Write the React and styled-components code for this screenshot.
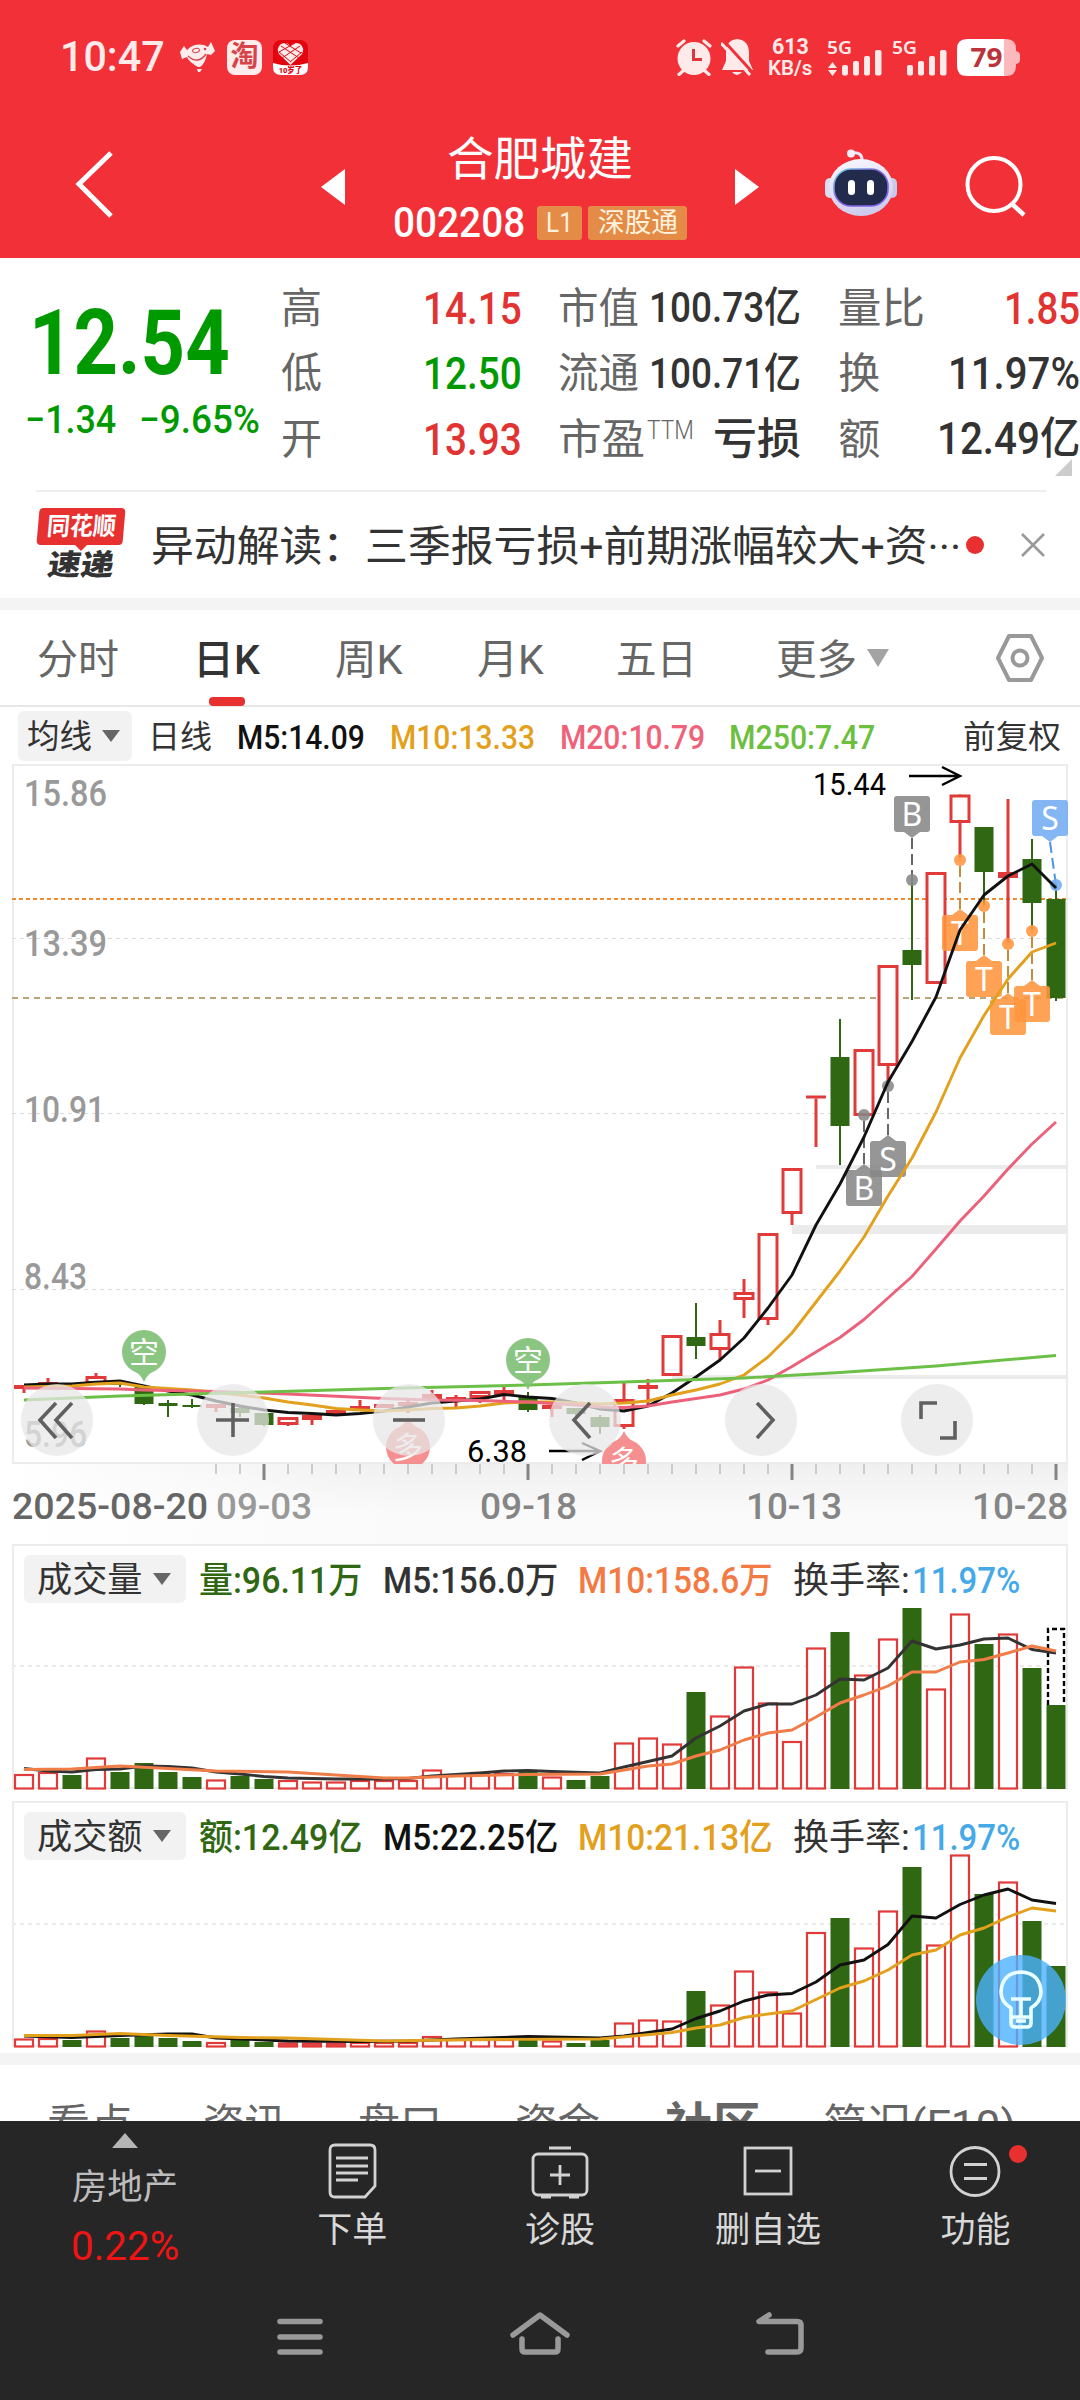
import React, { useLayoutEffect, useRef, useState } from 'react';
import styled, { createGlobalStyle } from 'styled-components';

const Global = createGlobalStyle`
  html, body { margin: 0; padding: 0; background: #fff; }
  body { font-family: Roboto, "Noto Sans CJK SC", sans-serif; line-height: 1; width: 1080px; overflow: hidden; }
  * { box-sizing: border-box; }
  svg { display: block; flex: none; }
`;

/* ---------- text that is condensed or widened to a given width ---------- */
const FitBox = styled.span`
  display: block;
  flex: none;
  width: ${(p) => p.$w}px;
  margin-left: ${(p) => p.$ml || 0}px;
  margin-top: ${(p) => p.$mt || 0}px;
  font-size: ${(p) => p.$size}px;
  font-weight: ${(p) => p.$weight || 400};
  color: ${(p) => p.$color || 'inherit'};
  white-space: nowrap;
  line-height: 1;
`;
const FitInner = styled.span`
  display: inline-block;
  vertical-align: top;
  transform-origin: 0 50%;
`;
function Fit({ w, ml, mt, size, weight, color, children }) {
  const ref = useRef(null);
  const [k, setK] = useState(1);
  useLayoutEffect(() => {
    if (ref.current && ref.current.offsetWidth) setK(w / ref.current.offsetWidth);
  }, [w, children]);
  return (
    <FitBox $w={w} $ml={ml} $mt={mt} $size={size} $weight={weight} $color={color}>
      <FitInner ref={ref} style={{ transform: `scaleX(${k})` }}>{children}</FitInner>
    </FitBox>
  );
}

const Screen = styled.div`
  width: 1080px;
  height: 2400px;
  display: flex;
  flex-direction: column;
  overflow: hidden;
  background: #fff;
`;

/* ---------- header ---------- */
const Header = styled.header`
  height: 258px;
  flex: none;
  background: #f13038;
  color: #fff;
  display: flex;
  flex-direction: column;
`;
const StatusBar = styled.div`
  height: 114px;
  padding: 0 59px 0 60px;
  display: flex;
  align-items: center;
  justify-content: space-between;
`;
const StatusSide = styled.div`
  display: flex;
  align-items: center;
`;
const AppBadge = styled.span`
  width: 35px;
  height: 35px;
  border-radius: 8px;
  margin-left: ${(p) => p.$ml}px;
  background: #ffeded;
  color: #d8434a;
  font-size: 28px;
  font-weight: 700;
  display: flex;
  align-items: center;
  justify-content: center;
`;
const NetSpeed = styled.div`
  margin-left: 15px;
  display: flex;
  flex-direction: column;
  align-items: center;
  color: #ffeaea;
`;
const SignalIcon = styled.svg`
  margin-left: ${(p) => p.$ml}px;
  overflow: visible;
`;
const TitleBar = styled.div`
  height: 144px;
  display: grid;
  grid-template-columns: 321px 24px 390px 24px 66px 72px 1fr;
`;
const TitleCell = styled.div`
  padding-left: ${(p) => p.$pl || 0}px;
  padding-top: ${(p) => p.$pt || 0}px;
`;
const TitleCenter = styled.div`
  display: flex;
  flex-direction: column;
  align-items: center;
  padding-top: 22px;
`;
const CodeLine = styled.div`
  display: flex;
  align-items: center;
  margin-top: 20px;
`;
const Badge = styled.span`
  width: ${(p) => p.$w}px;
  height: 34px;
  margin-left: ${(p) => p.$ml}px;
  border-radius: 3px;
  background: #e48b47;
  color: #fff3df;
  display: flex;
  align-items: center;
  justify-content: center;
`;

/* ---------- quote ---------- */
const Quote = styled.section`
  height: 232px;
  flex: none;
  display: flex;
  position: relative;
`;
const PriceCol = styled.div`
  width: 281px;
  padding: 41px 0 0 25px;
  color: #009a00;
`;
const Changes = styled.div`
  display: flex;
  margin-top: 12px;
`;
const StatCol = styled.div`
  width: ${(p) => p.$w}px;
  margin-right: ${(p) => p.$mr}px;
  padding-top: 17px;
  display: flex;
  flex-direction: column;
`;
const StatRow = styled.div`
  height: 65.5px;
  display: flex;
  align-items: center;
  justify-content: space-between;
`;
const LabelGroup = styled.div`
  display: flex;
  color: #666;
`;
const Corner = styled.i`
  position: absolute;
  right: 8px;
  bottom: 14px;
  border-left: 17px solid transparent;
  border-bottom: 17px solid #ccc;
`;

/* ---------- news ---------- */
const News = styled.section`
  height: 108px;
  flex: none;
  margin: 0 34px 0 36px;
  border-top: 2px solid #eee;
  display: flex;
  align-items: center;
`;
const Logo = styled.div`
  width: 90px;
  height: 74px;
  display: flex;
  flex-direction: column;
  align-items: center;
`;
const LogoTop = styled.div`
  width: 86px;
  height: 37px;
  background: #e73131;
  border-radius: 4px;
  transform: skewX(-5deg);
  color: #fff;
  display: flex;
  align-items: center;
  justify-content: center;
`;
const LogoTip = styled.i`
  border: 6px solid transparent;
  border-top: 6px solid #e73131;
  border-bottom: 0;
`;
const LogoBottom = styled.div`
  transform: skewX(-9deg);
  margin-top: 0;
  color: #333;
`;
const Dot = styled.i`
  width: 18px;
  height: 18px;
  border-radius: 50%;
  background: #e83030;
  margin-left: ${(p) => p.$ml || 0}px;
`;
const Band = styled.div`
  height: 12px;
  flex: none;
  background: #f4f4f4;
`;

/* ---------- period tabs ---------- */
const Tabs = styled.nav`
  height: 97px;
  flex: none;
  border-bottom: 2px solid #e7e7e7;
  display: flex;
  color: #666;
`;
const Tab = styled.div`
  margin-left: ${(p) => p.$ml}px;
  padding-top: 30px;
  height: 96px;
  display: flex;
  flex-direction: column;
  justify-content: space-between;
  align-items: center;
  color: ${(p) => (p.$on ? '#333' : '#666')};
`;
const Indicator = styled.i`
  width: 36px;
  height: 9px;
  border-radius: 4px;
  background: #e83030;
`;
const Caret = styled.i`
  border-left: ${(p) => p.$w / 2}px solid transparent;
  border-right: ${(p) => p.$w / 2}px solid transparent;
  border-top: ${(p) => p.$h}px solid ${(p) => p.$c || '#666'};
  margin-left: ${(p) => p.$ml || 0}px;
  margin-top: ${(p) => p.$mt || 0}px;
`;
const MaRow = styled.div`
  height: 57px;
  flex: none;
  padding-left: 18px;
  display: flex;
  align-items: center;
`;
const Chip = styled.div`
  width: ${(p) => p.$w}px;
  height: ${(p) => p.$h}px;
  padding-left: ${(p) => p.$pl}px;
  border-radius: 6px;
  background: #f2f2f2;
  color: #333;
  display: flex;
  align-items: center;
`;

/* ---------- charts ---------- */
const ChartWrap = styled.div`
  position: relative;
  height: 700px;
  flex: none;
`;
const Controls = styled.div`
  position: absolute;
  left: 21px;
  bottom: 8px;
  display: flex;
  gap: 104px;
`;
const RoundButton = styled.button`
  width: 72px;
  height: 72px;
  padding: 0;
  border: 0;
  border-radius: 50%;
  background: rgba(231, 231, 231, 0.74);
  display: flex;
  align-items: center;
  justify-content: center;
`;
const DateAxis = styled.div`
  height: 80px;
  flex: none;
  width: 1056px;
  margin-left: 12px;
  padding: 0;
  background: linear-gradient(90deg, #fff 0, rgba(255, 255, 255, 0) 400px), linear-gradient(#efefef, #fafafa 60%);
`;
const Dates = styled.div`
  display: flex;
  margin-top: 3px;
  color: #858585;
`;
const Panel = styled.section`
  position: relative;
  height: ${(p) => p.$h}px;
  flex: none;
`;
const PanelHead = styled.div`
  position: absolute;
  left: 24px;
  top: 11px;
  display: flex;
  align-items: center;
`;
const Bulb = styled.div`
  position: absolute;
  right: 14px;
  bottom: 8px;
  width: 90px;
  height: 90px;
  border-radius: 50%;
  background: rgba(75, 177, 255, 0.8);
  display: flex;
  align-items: center;
  justify-content: center;
`;

/* ---------- bottom ---------- */
const SectionTabs = styled.div`
  height: 56px;
  flex: none;
  overflow: hidden;
  display: flex;
  align-items: flex-start;
  padding-top: 39px;
  color: #666;
`;
const Footer = styled.footer`
  flex: 1;
  background: #262626;
  color: #d8d8d8;
`;
const Actions = styled.div`
  height: 170px;
  display: grid;
  grid-template-columns: 249px repeat(4, 207.7px);
`;
const Sector = styled.div`
  display: flex;
  flex-direction: column;
  align-items: center;
  padding-top: 12px;
`;
const UpCaret = styled.i`
  border-left: 13.5px solid transparent;
  border-right: 13.5px solid transparent;
  border-bottom: 15px solid #b5b5b5;
  margin-bottom: 22px;
`;
const Action = styled.div`
  display: flex;
  flex-direction: column;
  align-items: center;
  padding-top: 21px;
  padding-right: 1px;
  position: relative;
`;
const ActionDot = styled(Dot)`
  position: absolute;
  top: 24px;
  right: 53px;
`;
const SystemNav = styled.div`
  display: flex;
  padding: 20px 0 0 270px;
  gap: 180px;
`;

/* ---------- data ---------- */
const RED = '#e03a3a';
const GREEN = '#306713';
const cx = (i) => 24 + 24 * i;

// kind (r rising, g falling), body top, body bottom, wick top, wick bottom
const candles = [
  ['r', 1385, 1389, 1385, 1393], ['r', 1382, 1385, 1378, 1385], ['g', 1383, 1386, 1383, 1386], ['r', 1376, 1384, 1373, 1384],
  ['g', 1382, 1385, 1382, 1387], ['g', 1387, 1404, 1387, 1405], ['g', 1403, 1406, 1400, 1417], ['g', 1405, 1407, 1399, 1408],
  ['r', 1404, 1408, 1404, 1412], ['g', 1408, 1413, 1407, 1417], ['g', 1413, 1425, 1413, 1426], ['r', 1417, 1425, 1417, 1426],
  ['r', 1415, 1420, 1415, 1425], ['r', 1410, 1414, 1410, 1414], ['r', 1406, 1411, 1400, 1411], ['r', 1404, 1408, 1404, 1408],
  ['r', 1402, 1406, 1400, 1413], ['r', 1394, 1399, 1390, 1399], ['r', 1397, 1401, 1395, 1407], ['r', 1391, 1398, 1391, 1403],
  ['r', 1390, 1395, 1387, 1400], ['g', 1396, 1410, 1392, 1412], ['r', 1405, 1409, 1405, 1417], ['g', 1408, 1414, 1408, 1417],
  ['g', 1417, 1427, 1415, 1434], ['r', 1399, 1427, 1383, 1429], ['r', 1385, 1389, 1379, 1406], ['r', 1335, 1376, 1335, 1376],
  ['g', 1337, 1346, 1303, 1359], ['r', 1333, 1350, 1320, 1360], ['r', 1292, 1300, 1279, 1318], ['r', 1233, 1320, 1233, 1325],
  ['r', 1168, 1214, 1168, 1225], ['r', 1095.5, 1098.5, 1096, 1147], ['g', 1057, 1126, 1019, 1165], ['r', 1049, 1116, 1049, 1116],
  ['r', 965, 1066, 965, 1086], ['g', 950, 965, 880, 1000], ['r', 872, 984, 872, 984], ['r', 794.5, 823, 794, 858],
  ['g', 827, 872, 827, 905], ['r', 872, 878, 799, 943], ['g', 859, 903, 839, 930], ['g', 899, 998, 884, 1001],
];
const at = (ys, from = 0) => ys.map((y, i) => `${cx(from + i)},${y}`).join(' ');
const ma5 = at([1385, 1384, 1384, 1382.3, 1381, 1386, 1391, 1395, 1401, 1406, 1410, 1412.5, 1413.5, 1415, 1413.5, 1411, 1407, 1403, 1401, 1399, 1394.5, 1397, 1398.5, 1403, 1409, 1411, 1406, 1393, 1377, 1360, 1338, 1308, 1275, 1225, 1184, 1137, 1082, 1041.5, 997, 930, 895, 876, 864, 888]);
const ma10 = at([1387, 1386.5, 1386, 1384, 1383, 1387, 1388.5, 1390, 1392.5, 1395, 1398, 1402, 1405, 1408.5, 1410, 1411, 1410, 1408.5, 1408, 1406, 1403, 1402, 1402, 1403, 1404, 1403, 1401, 1395, 1390, 1384, 1375, 1357, 1333, 1302, 1271, 1237, 1196, 1158, 1112, 1058, 1015.5, 979, 952, 943]);
const ma20 = '24,1388 120,1389 144,1390 216,1391.5 288,1394 384,1398.5 432,1400 480,1400.5 528,1402 576,1405 600,1407 624,1407.5 648,1406 672,1402 696,1398.5 720,1395 744,1389 768,1380 792,1366.5 816,1352 840,1337.5 864,1319.5 888,1298 912,1276.5 936,1249 960,1221 984,1196 1008,1169 1032,1144 1056,1122';
const ma250 = '24,1400 120,1396 264,1392 384,1388.5 528,1385 624,1382 744,1378 840,1372.5 936,1366 1056,1355.5';

const kinds = candles.map((c) => c[0]);
const volTops = [1774, 1772, 1775, 1757.5, 1772, 1763, 1772, 1777, 1779.5, 1776, 1779, 1780, 1781.5, 1781.5, 1780, 1780, 1780, 1769.5, 1774, 1772, 1773, 1771, 1776.5, 1780, 1776, 1742.5, 1737.5, 1743.5, 1692, 1715.5, 1666.5, 1702.5, 1741, 1647.5, 1632, 1674.5, 1638.5, 1608, 1688.5, 1613.5, 1644, 1633.5, 1668, 1705];
const amtTops = [2038.5, 2038, 2040, 2030.5, 2038, 2036, 2038, 2041, 2042, 2040, 2042, 2042.5, 2042.5, 2042.5, 2042, 2042, 2042, 2036, 2039, 2039, 2039, 2038, 2040.5, 2043, 2040, 2022.5, 2019.5, 2020.5, 1991, 2004.5, 1970.5, 1991.5, 2012.5, 1932, 1918, 1947.5, 1910.5, 1867, 1944.5, 1854.5, 1894, 1881.5, 1921, 1966];
const vol5 = '24,1768.5 48,1771 72,1772 96,1769.5 120,1769 144,1766 168,1766.5 192,1768 216,1772 240,1774 264,1776.5 288,1778 336,1779 384,1779 408,1778.5 432,1776 456,1774.5 480,1773 504,1771 528,1770.5 552,1771.5 600,1773 624,1767 648,1761.5 672,1756 696,1738 720,1726 744,1711 768,1704 792,1704 816,1695 840,1679 864,1680 888,1668 912,1641 936,1649 960,1645 984,1639 1008,1638 1032,1649.5 1056,1653';
const vol10 = '24,1769.5 72,1769 120,1766 168,1768.5 216,1771 288,1772 336,1775 384,1778 408,1778 456,1776 528,1774.5 600,1774 624,1770 648,1766 672,1764 696,1756 720,1750 744,1740 768,1733 792,1730 816,1717 840,1703 864,1695 888,1686 912,1672 936,1672 960,1662 984,1659.5 1008,1653 1032,1646 1056,1651';
const amt5 = '24,2036 72,2037.5 120,2035.5 168,2034 192,2034 216,2038 264,2040 288,2041 360,2041.5 408,2041 456,2039 528,2036.5 600,2038 624,2036 672,2029 696,2018.5 720,2011 744,2001 768,1995 792,1993.5 816,1982 840,1965 864,1960 888,1944.5 912,1916 936,1918 960,1904.5 984,1895 1008,1889 1032,1900 1056,1903.5';
const amt10 = '24,2035.5 72,2035.5 120,2033.5 168,2035.5 240,2037.5 288,2038 384,2041 480,2039.5 600,2039 672,2032.5 696,2028 720,2025 744,2017.5 768,2014 792,2011 816,1999.5 840,1988 864,1981 888,1970 912,1955 936,1950 960,1935 984,1928 1008,1917 1032,1908 1056,1911';

const markers = [
  { t: 'B', x: 912, y: 796, dx: 912, dy: 880, c: '#888888', l: '#666' },
  { t: 'B', x: 864, y: 1170, dx: 864, dy: 1115, up: true, c: '#888888', l: '#666' },
  { t: 'S', x: 888, y: 1141, dx: 888, dy: 1086, up: true, c: '#888888', l: '#666' },
  { t: 'T', x: 960, y: 915, dx: 960, dy: 860, up: true, c: '#ff963f', l: '#c98a3c' },
  { t: 'T', x: 984, y: 961, dx: 984, dy: 906, up: true, c: '#ff963f', l: '#c98a3c' },
  { t: 'T', x: 1008, y: 999, dx: 1008, dy: 944, up: true, c: '#ff963f', l: '#c98a3c' },
  { t: 'T', x: 1032, y: 986, dx: 1032, dy: 931, up: true, c: '#ff963f', l: '#c98a3c' },
  { t: 'S', x: 1050, y: 800, dx: 1056, dy: 885, c: '#74adf2', l: '#4b94e6' },
];

function Marker({ t, x, y, dx, dy, up, c, l }) {
  const tip = up ? y - 6 : y + 42;
  const base = up ? y : y + 36;
  return (
    <g>
      <line x1={x} y1={tip} x2={dx} y2={dy} stroke={l} strokeWidth="2" strokeDasharray="11 5" />
      <g fill={c} opacity="0.88">
        <circle cx={dx} cy={dy} r="6" />
        <rect x={x - 18} y={y} width="36" height="36" rx="3" />
        <path d={`M${x - 8} ${base}L${x} ${tip}L${x + 8} ${base}Z`} />
      </g>
      <text x={x} y={y + 29.5} fontSize="32" fill="#fff" textAnchor="middle" fontFamily="Noto Sans">{t}</text>
    </g>
  );
}

function Pin({ x, y, up, c, children }) {
  const s = up ? -1 : 1;
  return (
    <g opacity="0.95">
      <circle cx={x} cy={y} r="22" fill={c} />
      <path d={`M${x - 13} ${y + 17 * s}Q${x - 3} ${y + 22 * s} ${x} ${y + 30 * s}Q${x + 3} ${y + 22 * s} ${x + 13} ${y + 17 * s}Z`} fill={c} />
      <text x={x} y={y + 11} fontSize="30" fill="#fff" textAnchor="middle" fontFamily="Noto Sans CJK SC">{children}</text>
    </g>
  );
}

function SvgText({ x, y, w, size, fill, weight, children }) {
  return (
    <text x={x} y={y} fontSize={size} fill={fill} fontWeight={weight} textLength={w} lengthAdjust="spacingAndGlyphs">{children}</text>
  );
}

function KChart() {
  return (
    <svg width="1080" height="700" viewBox="0 764 1080 700">
      <g stroke="#ececec" strokeWidth="2" fill="none">
        <rect x="13" y="765" width="1054" height="698" />
      </g>
      <g stroke="#dadada" strokeWidth="1.2" strokeDasharray="4 4">
        <line x1="12" x2="1067" y1="938.5" y2="938.5" />
        <line x1="12" x2="1067" y1="1113.5" y2="1113.5" />
        <line x1="12" x2="1067" y1="1289.5" y2="1289.5" />
      </g>
      <g fill="#ebebeb">
        <rect x="816" y="1165" width="252" height="4" />
        <rect x="792" y="1225" width="276" height="9" />
        <rect x="672" y="1375" width="396" height="4" />
      </g>
      <line x1="12" x2="1067" y1="899" y2="899" stroke="#f08a30" strokeWidth="2" strokeDasharray="4 3" />
      <line x1="12" x2="1067" y1="998" y2="998" stroke="#b9a47c" strokeWidth="2" strokeDasharray="6 5" />
      <g>
        <SvgText x="24" y="806" w="83" size="36" weight="500" fill="#999">15.86</SvgText>
        <SvgText x="24" y="956" w="83" size="36" weight="500" fill="#999">13.39</SvgText>
        <SvgText x="24" y="1122" w="81" size="36" weight="500" fill="#999">10.91</SvgText>
        <SvgText x="24" y="1289" w="63" size="36" weight="500" fill="#999">8.43</SvgText>
        <SvgText x="24" y="1447" w="63" size="36" weight="500" fill="#999">5.96</SvgText>
      </g>
      {candles.map(([k, t, b, wt, wb], i) => {
        const x = cx(i);
        if (k === 'g') {
          return (
            <g key={i} fill={GREEN}>
              <rect x={x - 1} y={wt} width="2" height={wb - wt} />
              <rect x={x - 9.5} y={t} width="19" height={b - t} />
            </g>
          );
        }
        const hollow = b - t > 6.5;
        return (
          <g key={i}>
            {wt < t && <rect x={x - 1.5} y={wt} width="3" height={t - wt} fill={RED} />}
            {wb > b && <rect x={x - 1.5} y={b} width="3" height={wb - b} fill={RED} />}
            {hollow
              ? <rect x={x - 9} y={t + 1.5} width="18" height={b - t - 3} fill="#fff" stroke={RED} strokeWidth="3" />
              : <rect x={x - 10} y={t} width="20" height={b - t} fill={RED} />}
          </g>
        );
      })}
      {markers.map((m, i) => <Marker key={i} {...m} />)}
      <g fill="none" strokeWidth="2.9" strokeLinejoin="round">
        <polyline points={ma5} stroke="#111" />
        <polyline points={ma10} stroke="#e2a01c" />
        <polyline points={ma20} stroke="#ec6079" />
        <polyline points={ma250} stroke="#6cc047" />
      </g>
      <Pin x={144} y={1352} c="#84c27c">空</Pin>
      <Pin x={528} y={1360} c="#84c27c">空</Pin>
      <Pin x={408} y={1447} up c="#f68a8a">多</Pin>
      <Pin x={624} y={1461} up c="#f68a8a">多</Pin>
      <SvgText x="813" y="795" w="73" size="31" fill="#000">15.44</SvgText>
      <SvgText x="467" y="1462" w="60" size="31" fill="#000">6.38</SvgText>
      <g stroke="#000" strokeWidth="2.4" fill="none">
        <path d="M909 776H960M942 767L960 776L942 785" />
        <path d="M549 1451H600M582 1443L600 1451L582 1460" />
      </g>
    </svg>
  );
}

function Bars({ top, base, grid, tops, children, bottom }) {
  return (
    <svg width="1080" height={bottom - top} viewBox={`0 ${top} 1080 ${bottom - top}`}>
      <path d={`M13 ${base}V${top + 1}H1067V${base}`} fill="none" stroke="#ececec" strokeWidth="2" />
      <line x1="12" x2="1067" y1={base - 1} y2={base - 1} stroke="#ececec" strokeWidth="2" />
      <line x1="12" x2="1067" y1={grid} y2={grid} stroke="#ebebeb" strokeWidth="2" strokeDasharray="4 4" />
      {tops.map((t, i) => (kinds[i] === 'g'
        ? <rect key={i} x={cx(i) - 9.5} y={t} width="19" height={base - t} fill={GREEN} />
        : <rect key={i} x={cx(i) - 9} y={t + 1} width="18" height={base - t - 1.5} fill={base - t < 5 ? '#e85050' : '#fff'} stroke={RED} strokeWidth="2.2" />))}
      {children}
    </svg>
  );
}

function AxisTicks() {
  const ticks = [];
  for (let i = 8; i < 44; i += 1) {
    const big = (i - 10) % 11 === 0;
    ticks.push(<rect key={i} x={cx(i) - 12 - (big ? 1.5 : 0.5)} y="0" width={big ? 3 : 1} height={big ? 16 : 10} fill={big ? '#858585' : '#a5a5a5'} />);
  }
  return <svg width="1056" height="18">{ticks}</svg>;
}

const Signal = ({ arrows }) => (
  <SignalIcon width="56" height="37" viewBox="0 0 56 37" $ml={arrows ? 15 : 9}>
    <text x="0" y="14.5" fontSize="18" fontWeight="600" fill="#ffeaea" fontFamily="Noto Sans" textLength="25" lengthAdjust="spacingAndGlyphs">5G</text>
    {arrows && <path d="M1 29L5.5 23L10 29ZM1 31L5.5 37L10 31Z" fill="#ffeaea" />}
    <g fill="#ffeaea">
      <rect x="15" y="26" width="6" height="10.5" rx="2" />
      <rect x="26" y="22" width="6" height="14.5" rx="2" />
      <rect x="37" y="17" width="6" height="19.5" rx="2" />
      <rect x="48" y="11" width="6.5" height="25.5" rx="2" />
    </g>
  </SignalIcon>
);

const Triangle = ({ d }) => <svg width="24" height="36"><path d={d} fill="#fff" /></svg>;

const Robot = () => (
  <svg width="72" height="68" viewBox="0 0 72 68">
    <defs>
      <linearGradient id="shell" x1="0" y1="0" x2="0.3" y2="1"><stop offset="0" stopColor="#fafaff" /><stop offset="1" stopColor="#cfcdee" /></linearGradient>
      <linearGradient id="rim" x1="0" y1="0" x2="1" y2="1"><stop offset="0" stopColor="#6fd6e8" /><stop offset="0.5" stopColor="#8658dc" /><stop offset="1" stopColor="#7b6cf0" /></linearGradient>
    </defs>
    <path d="M26 4Q38 2 37 13" fill="none" stroke="#e9e6f6" strokeWidth="3" />
    <circle cx="26" cy="4.500" r="4" fill="#f3eef8" />
    <rect x="0" y="29" width="10" height="20" rx="5" fill="#dcdcf2" />
    <rect x="62" y="29" width="10" height="20" rx="5" fill="#c9c9ec" />
    <ellipse cx="36" cy="38.500" rx="32" ry="28.500" fill="url(#shell)" />
    <rect x="9" y="20" width="54" height="37" rx="17" fill="#222b4c" stroke="url(#rim)" strokeWidth="1.600" />
    <rect x="23" y="31" width="7" height="15" rx="3.500" fill="#fff" />
    <rect x="42" y="31" width="7" height="15" rx="3.500" fill="#fff" />
  </svg>
);

function Stat({ label, lw, v, vw, c = '#333', size = 42, sup, weight = 500 }) {
  return (
    <StatRow>
      <LabelGroup>
        <Fit w={lw} size={42} mt={2}>{label}</Fit>
        {sup && <Fit w={47} ml={2} size={26} weight={300}>{sup}</Fit>}
      </LabelGroup>
      <Fit w={vw} size={size} weight={weight} color={c} mt={1}>{v}</Fit>
    </StatRow>
  );
}

const up = '#e23333';

function Head({ name, items }) {
  return (
    <PanelHead>
      <Chip $w={162} $h={48} $pl={13}>
        <Fit w={106} size={35.5} mt={4}>{name}</Fit>
        <Caret $w={18} $h={12} $ml={10} />
      </Chip>
      {items.map(([text, w, ml, color], i) => <Fit key={i} w={w} ml={ml} mt={3} size={36} color={color} weight={i === 3 ? 400 : 500}>{text}</Fit>)}
    </PanelHead>
  );
}

const ctl = { fill: 'none', stroke: '#606060', strokeWidth: 3.6 };
const controlPaths = [
  'M35 19L19 36L35 54M51 19L35 36L51 54', 'M19 36H52M36 19V53', 'M20 36H52',
  'M41 19L25 36L41 54', 'M32 19L48 36L32 54', 'M36 19H20V35M39 54H54V37',
];

export default function App() {
  return (
    <Screen>
      <Global />
      <Header>
        <StatusBar>
          <StatusSide>
            <Fit w={105} size={42} weight={500} color="#ffeaea">10:47</Fit>
            <svg width="35" height="30" viewBox="0 0 35 30" style={{ marginLeft: 15 }}>
              <path d="M0 10L4 4L7 8Q14 1 24 3L28 5L31 0L35 9L31 13L27 12Q25 22 20 25H18Q9 20 7 15L2 17Z" fill="#ffeded" />
              <path d="M8 14Q18 23 26 12" stroke="#d8434a" strokeWidth="1.4" fill="none" />
              <ellipse cx="16" cy="8.500" rx="3.500" ry="2" transform="rotate(-12 16 8.500)" fill="none" stroke="#d8434a" />
              <circle cx="25" cy="7" r="1.300" fill="#d8434a" />
              <path d="M17 27H22L20 30H18Z" fill="#ffeded" />
            </svg>
            <AppBadge $ml={12}>淘</AppBadge>
            <svg width="35" height="35" viewBox="0 0 35 35" style={{ marginLeft: 11 }}>
              <rect width="35" height="35" rx="8" fill="#e3040f" />
              <path d="M0 23Q17 28 35 23V27Q35 35 27 35H8Q0 35 0 27Z" fill="#fff" />
              <path d="M17.500 25L6 14Q3 8 8 4Q14 1 17.500 6Q21 1 27 4Q32 8 29 14Z" fill="#ffe9e9" />
              <path d="M8 6L26 18M12 3L28 13M6 12L18 22M27 6L9 18M22 3L6 12M29 12L17 22" stroke="#e3040f" strokeWidth="1" />
              <text x="17.500" y="33" fontSize="7.500" fontWeight="900" fill="#e3040f" textAnchor="middle" fontFamily="Roboto, Noto Sans CJK SC">10岁了</text>
            </svg>
          </StatusSide>
          <StatusSide>
            <svg width="36" height="37" viewBox="0 0 36 37">
              <circle cx="18" cy="19.500" r="16.500" fill="#ffeaea" />
              <path d="M2 7L8 2M28 2L34 7M8 31L3 35.500M28 31L33 35.500" stroke="#ffeaea" strokeWidth="3.200" strokeLinecap="round" />
              <path d="M17.500 10V20.500H26" stroke="#e0353c" strokeWidth="3" fill="none" />
            </svg>
            <svg width="32" height="37" viewBox="0 0 32 37" style={{ marginLeft: 9 }}>
              <path d="M16 0Q28 1 28 14V22L32 31H1L5 22V14Q5 1 16 0ZM11 33H21Q16 39 11 33Z" fill="#ffeaea" />
              <path d="M3 2L33 35" stroke="#f13038" strokeWidth="3" />
              <path d="M0 4L29 36" stroke="#ffeaea" strokeWidth="3" />
            </svg>
            <NetSpeed>
              <Fit w={37} size={22} weight={700}>613</Fit>
              <Fit w={44} size={20} weight={600}>KB/s</Fit>
            </NetSpeed>
            <Signal arrows />
            <Signal />
            <svg width="64" height="37" viewBox="0 0 64 37" style={{ marginLeft: 9 }}>
              <path d="M44 0H49Q59 0 59 10V12Q63 13 63 16V21Q63 24 59 25V27Q59 37 49 37H44Z" fill="#fbb9bd" />
              <path d="M10 0H47V37H10Q0 37 0 27V10Q0 0 10 0Z" fill="#fff" />
              <text x="13.500" y="28" fontSize="27" fontWeight="700" fill="#bb343b" fontFamily="Noto Sans" textLength="32" lengthAdjust="spacingAndGlyphs">79</text>
            </svg>
          </StatusSide>
        </StatusBar>
        <TitleBar>
          <TitleCell $pl={74} $pt={36}>
            <svg width="42" height="70"><path d="M37 3L5 34L37 66" fill="none" stroke="#fff" strokeWidth="5" /></svg>
          </TitleCell>
          <TitleCell $pt={55}><Triangle d="M24 0V36L0 18Z" /></TitleCell>
          <TitleCenter>
            <Fit w={186} size={46}>合肥城建</Fit>
            <CodeLine>
              <Fit w={132} size={42} weight={500}>002208</Fit>
              <Badge $w={45} $ml={12}><Fit w={27} size={28}>L1</Fit></Badge>
              <Badge $w={99} $ml={6}><Fit w={80} size={27} mt={1}>深股通</Fit></Badge>
            </CodeLine>
          </TitleCenter>
          <TitleCell $pt={55}><Triangle d="M0 0V36L24 18Z" /></TitleCell>
          <TitleCell />
          <TitleCell $pt={35}><Robot /></TitleCell>
          <TitleCell $pl={67} $pt={40}>
            <svg width="64" height="64"><circle cx="30" cy="30.500" r="26.500" fill="none" stroke="#fff" strokeWidth="4" /><path d="M48 50L60 61" stroke="#fff" strokeWidth="4.500" /></svg>
          </TitleCell>
        </TitleBar>
      </Header>

      <Quote>
        <PriceCol>
          <Fit w={201} ml={4} size={90} weight={700}>12.54</Fit>
          <Changes>
            <Fit w={91} size={39} weight={500}>−1.34</Fit>
            <Fit w={121} ml={23} size={39} weight={500}>−9.65%</Fit>
          </Changes>
        </PriceCol>
        <StatCol $w={242} $mr={36}>
          <Stat label="高" lw={41} v="14.15" vw={99} c={up} size={45} />
          <Stat label="低" lw={41} v="12.50" vw={99} c="#009a00" size={45} />
          <Stat label="开" lw={41} v="13.93" vw={99} c={up} size={45} />
        </StatCol>
        <StatCol $w={243} $mr={37}>
          <Stat label="市值" lw={81} v="100.73亿" vw={152} />
          <Stat label="流通" lw={81} v="100.71亿" vw={152} />
          <Stat label="市盈" lw={87} sup="TTM" v="亏损" vw={88} size={43} />
        </StatCol>
        <StatCol $w={242} $mr={0}>
          <Stat label="量比" lw={87} v="1.85" vw={76} c={up} size={45} />
          <Stat label="换" lw={42} v="11.97%" vw={132} size={45} />
          <Stat label="额" lw={42} v="12.49亿" vw={143} size={44} />
        </StatCol>
        <Corner />
      </Quote>

      <News>
        <Logo>
          <LogoTop><Fit w={69} size={25} weight={700}>同花顺</Fit></LogoTop>
          <LogoTip />
          <LogoBottom><Fit w={66} size={29} weight={900}>速递</Fit></LogoBottom>
        </Logo>
        <Fit w={810} ml={25} mt={3} size={41.5} color="#333">异动解读：三季报亏损+前期涨幅较大+资···</Fit>
        <Dot $ml={5} />
        <svg width="26" height="26" style={{ marginLeft: 36 }}><path d="M2 2L24 24M24 2L2 24" stroke="#999" strokeWidth="2.600" /></svg>
      </News>
      <Band />

      <Tabs>
        <Tab $ml={37}><Fit w={82} size={41}>分时</Fit></Tab>
        <Tab $ml={74} $on><Fit w={67} size={41} weight={500}>日K</Fit><Indicator /></Tab>
        <Tab $ml={75}><Fit w={68} size={41}>周K</Fit></Tab>
        <Tab $ml={74}><Fit w={67} size={41}>月K</Fit></Tab>
        <Tab $ml={72}><Fit w={81} size={41}>五日</Fit></Tab>
        <Tab $ml={79}><Fit w={81} size={41}>更多</Fit></Tab>
        <Caret $w={23} $h={18} $c="#a3a3a3" $ml={10} $mt={39} />
        <svg width="50" height="48" viewBox="0 0 50 48" style={{ margin: '24px 0 0 106px' }}>
          <path d="M14 2H36L47 24L36 46H14L3 24Z" fill="none" stroke="#999" strokeWidth="4" strokeLinejoin="round" />
          <circle cx="25" cy="24" r="7.500" fill="none" stroke="#999" strokeWidth="4" />
        </svg>
      </Tabs>
      <MaRow>
        <Chip $w={114} $h={50} $pl={9}>
          <Fit w={65} size={33} mt={2}>均线</Fit>
          <Caret $w={18} $h={12} $ml={10} />
        </Chip>
        <Fit w={64} ml={16} mt={2} size={32} color="#333">日线</Fit>
        <Fit w={128} ml={25} mt={2} size={34} weight={500} color="#111">M5:14.09</Fit>
        <Fit w={145} ml={25} mt={2} size={34} weight={500} color="#e2a01c">M10:13.33</Fit>
        <Fit w={145} ml={25} mt={2} size={34} weight={500} color="#f0617a">M20:10.79</Fit>
        <Fit w={146} ml={24} mt={2} size={34} weight={500} color="#6cc040">M250:7.47</Fit>
        <Fit w={98} ml={88} mt={2} size={32} color="#333">前复权</Fit>
      </MaRow>

      <ChartWrap>
        <KChart />
        <Controls>
          {controlPaths.map((d) => (
            <RoundButton key={d}><svg width="72" height="72"><path d={d} {...ctl} /></svg></RoundButton>
          ))}
        </Controls>
      </ChartWrap>
      <DateAxis>
        <AxisTicks />
        <Dates>
          <Fit w={196} size={36} weight={500} mt={4} color="#666">2025-08-20</Fit>
          <Fit w={96} ml={8} size={36} weight={500} mt={4} color="#999">09-03</Fit>
          <Fit w={97} ml={168} size={36} weight={500} mt={4}>09-18</Fit>
          <Fit w={96} ml={169} size={36} weight={500} mt={4}>10-13</Fit>
          <Fit w={96} ml={130} size={36} weight={500} mt={4}>10-28</Fit>
        </Dates>
      </DateAxis>

      <Panel $h={257}>
        <Bars top={1544} bottom={1801} base={1789} grid={1666} tops={volTops}>
          <path d="M1048 1705V1629H1064V1705" fill="#fff" stroke="#000" strokeWidth="2.400" strokeDasharray="5 3" />
          <g fill="none" strokeWidth="2.9" strokeLinejoin="round">
            <polyline points={vol5} stroke="#333" />
            <polyline points={vol10} stroke="#f07c48" />
          </g>
        </Bars>
        <Head name="成交量" items={[['量:96.11万', 163, 13, GREEN], ['M5:156.0万', 175, 21, '#333'], ['M10:158.6万', 195, 20, '#f47a44'], ['换手率:', 117, 20, '#333'], ['11.97%', 108, 2, '#45a9e8']]} />
      </Panel>
      <Panel $h={252}>
        <Bars top={1801} bottom={2053} base={2047} grid={1924} tops={amtTops}>
          <g fill="none" strokeWidth="2.9" strokeLinejoin="round">
            <polyline points={amt5} stroke="#111" />
            <polyline points={amt10} stroke="#e2a01c" />
          </g>
        </Bars>
        <Head name="成交额" items={[['额:12.49亿', 163, 13, GREEN], ['M5:22.25亿', 175, 21, '#111'], ['M10:21.13亿', 195, 20, '#e2a01c'], ['换手率:', 117, 20, '#333'], ['11.97%', 108, 2, '#45a9e8']]} />
        <Bulb>
          <svg width="44" height="60" viewBox="0 0 44 60" fill="none" stroke="#eaffff" strokeWidth="3.600" strokeLinejoin="round">
            <path d="M12 47V38Q2 32 2 22Q3 3 22 2Q41 3 42 22Q42 32 32 38V47ZM12 47V53Q12 57 16 57H28Q32 57 32 53V47M12 29H32M22 29V47M17 51H27" />
          </svg>
        </Bulb>
      </Panel>
      <Band />

      <SectionTabs>
        <Fit w={86} ml={47} size={43}>看点</Fit>
        <Fit w={83} ml={70} size={43}>资讯</Fit>
        <Fit w={84} ml={72} size={43}>盘口</Fit>
        <Fit w={85} ml={73} size={43}>资金</Fit>
        <Fit w={96} ml={65} size={48} weight={600} mt={-2}>社区</Fit>
        <Fit w={193} ml={62} size={43}>简况(F10)</Fit>
      </SectionTabs>
      <Footer>
        <Actions>
          <Sector>
            <UpCaret />
            <Fit w={106} size={35} color="#bcbcbc">房地产</Fit>
            <Fit w={108} size={40} mt={22} color="#f01414">0.22%</Fit>
          </Sector>
          <Action>
            <svg width="52" height="58" viewBox="0 0 52 58" fill="none" stroke="#d2d2d2" strokeWidth="2.800">
              <path d="M9 3H44Q49 3 49 8V44L39 55H9Q4 55 4 50V8Q4 3 9 3Z" /><path d="M10 16H42M10 24H42M10 31H42M10 38H32" />
            </svg>
            <Fit w={70} size={35} mt={13}>下单</Fit>
          </Action>
          <Action>
            <svg width="60" height="58" viewBox="0 0 60 58" fill="none" stroke="#d2d2d2" strokeWidth="2.800">
              <rect x="3" y="12" width="54" height="41" rx="5" /><path d="M19 6H41M30 23V43M20 33H40M11 55H21M39 55H49" />
            </svg>
            <Fit w={70} size={35} mt={13}>诊股</Fit>
          </Action>
          <Action>
            <svg width="52" height="58" viewBox="0 0 52 58" fill="none" stroke="#d2d2d2" strokeWidth="2.800">
              <rect x="3" y="6" width="46" height="46" /><path d="M13 29H39" />
            </svg>
            <Fit w={106} size={35} mt={13}>删自选</Fit>
          </Action>
          <Action>
            <svg width="54" height="58" viewBox="0 0 54 58" fill="none" stroke="#d2d2d2" strokeWidth="2.800">
              <circle cx="27" cy="29.500" r="24" /><path d="M16 22.500H39M16 36.500H39" />
            </svg>
            <ActionDot />
            <Fit w={70} size={35} mt={13}>功能</Fit>
          </Action>
        </Actions>
        <SystemNav>
          <svg width="60" height="46" fill="none" stroke="#999" strokeWidth="5.500" strokeLinecap="round"><path d="M10 10.500H50M10 26H50M10 41H50" /></svg>
          <svg width="60" height="46" fill="none" stroke="#999" strokeWidth="5.500" strokeLinecap="round" strokeLinejoin="round"><path d="M3 24L30 4L57 24M12 28V38Q12 41 15 41H45Q48 41 48 38V28" /></svg>
          <svg width="60" height="46" fill="none" stroke="#999" strokeWidth="5.500" strokeLinecap="round" strokeLinejoin="round"><path d="M19 4L9 10.500H47Q51 10.500 51 14V37Q51 41 47 41H18" /></svg>
        </SystemNav>
      </Footer>
    </Screen>
  );
}
